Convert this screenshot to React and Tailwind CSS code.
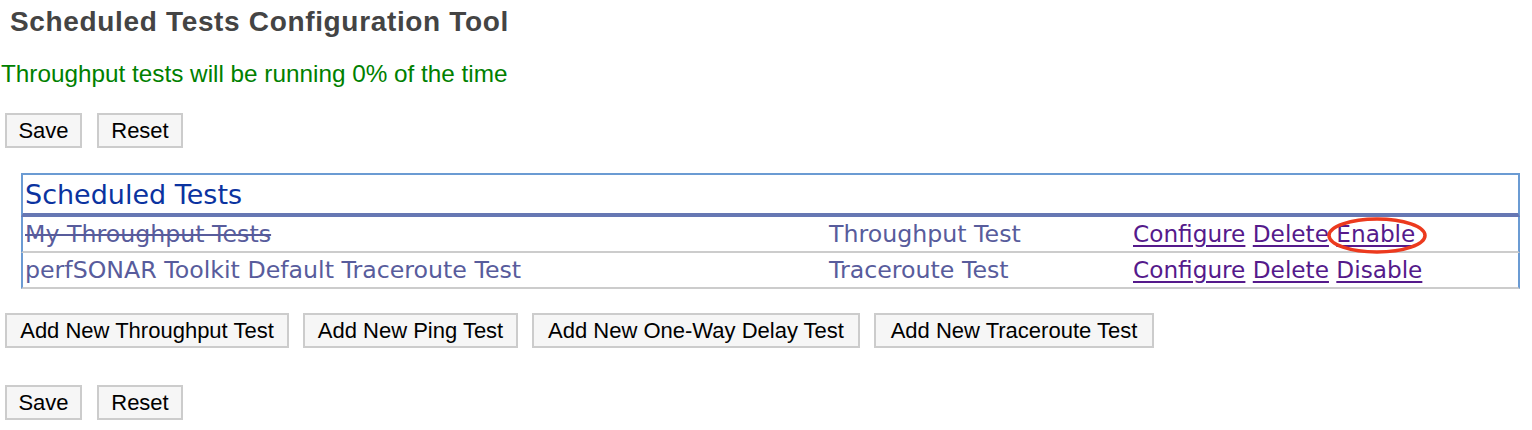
import React from 'react';

const sans = { fontFamily: '"Liberation Sans", Arial, sans-serif' };
const lucida = { fontFamily: '"DejaVu Sans", Verdana, sans-serif' };

const tests = [
  { id: 1, name: 'My Throughput Tests', type: 'Throughput Test', disabled: true },
  { id: 2, name: 'perfSONAR Toolkit Default Traceroute Test', type: 'Traceroute Test', disabled: false },
];

function Button({ children, width }) {
  return (
    <button
      className={`h-[35px] ${width} border-2 border-[#cccccc] bg-[#f6f6f6] text-[22px] leading-none text-black`}
      style={sans}
    >
      {children}
    </button>
  );
}

function SaveReset() {
  return (
    <div className="flex gap-[15px] pl-[5px]">
      <Button width="w-[77px]">Save</Button>
      <Button width="w-[86px]">Reset</Button>
    </div>
  );
}

// the red circle drawn round the Enable link
function Highlight({ children }) {
  return (
    <span className="relative inline-block">
      {children}
      <svg
        className="pointer-events-none absolute left-[-9px] top-[0px] h-[37px] w-[100px] overflow-visible"
        viewBox="0 0 100 37"
      >
        <ellipse cx="50" cy="18.5" rx="48" ry="16.5" fill="none" stroke="#ec3a1e" strokeWidth="3.5" />
      </svg>
    </span>
  );
}

function TestRow({ test }) {
  const link = 'text-[#551a8b] underline underline-offset-[3px] decoration-[2px]';
  return (
    <div
      className="grid grid-cols-[804px_305px_1fr] h-[36px] border-x-2 border-b-2 border-x-[#6b9bd3] border-b-[#cccccc] text-[23.7px] leading-[34px] text-[#585c9c]"
      style={lucida}
    >
      <div className={`pl-[2px] whitespace-nowrap ${test.disabled ? 'line-through decoration-[2px]' : ''}`}>
        {test.name}
      </div>
      <div className="pl-[2px] whitespace-nowrap">{test.type}</div>
      <div className="pl-[1px] whitespace-nowrap text-[23.2px]">
        <a href="#" className={link}>Configure</a>{' '}
        <a href="#" className={link}>Delete</a>{' '}
        {test.disabled ? (
          <Highlight>
            <a href="#" className={link}>Enable</a>
          </Highlight>
        ) : (
          <a href="#" className={link}>Disable</a>
        )}
      </div>
    </div>
  );
}

export default function App() {
  return (
    <div className="w-[1532px] h-[430px] bg-white overflow-hidden">
      <h1
        className="pt-[6px] pl-[10px] text-[28px] leading-[32px] font-bold tracking-[0.66px] text-[#444444]"
        style={sans}
      >
        Scheduled Tests Configuration Tool
      </h1>

      <p className="mt-[22px] pl-[1px] text-[24.3px] leading-[28px] text-[#008000]" style={sans}>
        Throughput tests will be running 0% of the time
      </p>

      <div className="mt-[25px]">
        <SaveReset />
      </div>

      {/* Scheduled tests table */}
      <div className="mt-[25px] ml-[21px] w-[1499px]">
        <div
          className="h-[44px] border-x-2 border-t-2 border-b-4 border-x-[#6b9bd3] border-t-[#6b9bd3] border-b-[#6677b3] pl-[2px] pt-[1px] text-[27px] leading-[37px] text-[#0b33a0]"
          style={lucida}
        >
          Scheduled Tests
        </div>
        {tests.map((t) => (
          <TestRow key={t.id} test={t} />
        ))}
      </div>

      <div className="mt-[24px] flex gap-[14px] pl-[5px]">
        <Button width="w-[284px]">Add New Throughput Test</Button>
        <Button width="w-[215px]">Add New Ping Test</Button>
        <Button width="w-[328px]">Add New One-Way Delay Test</Button>
        <Button width="w-[280px]">Add New Traceroute Test</Button>
      </div>

      <div className="mt-[37px]">
        <SaveReset />
      </div>
    </div>
  );
}
